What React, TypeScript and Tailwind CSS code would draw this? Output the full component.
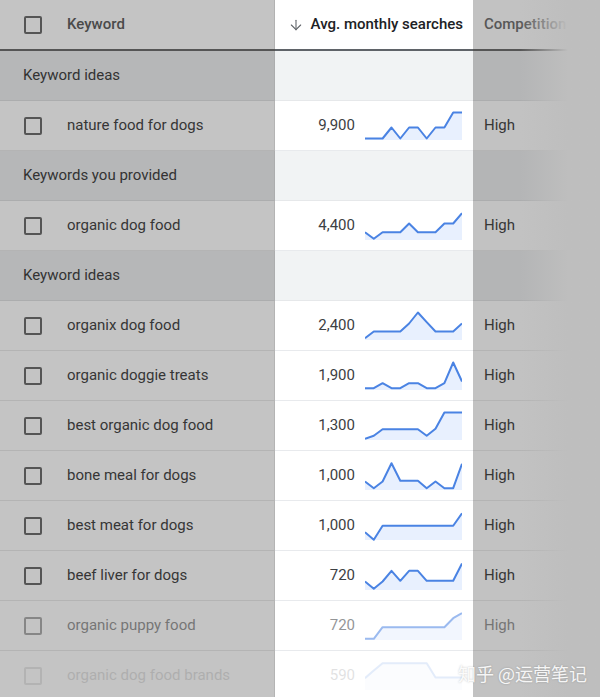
import React from 'react';
import { ArrowDown } from 'lucide-react';

type Row =
  | { kind: 'group'; label: string }
  | { kind: 'item'; keyword: string; searches: string; trend: number[]; fade?: 'mid' | 'low' };

const rows: Row[] = [
  { kind: 'group', label: 'Keyword ideas' },
  { kind: 'item', keyword: 'nature food for dogs', searches: '9,900', trend: [27, 27, 27, 16, 27, 16, 16, 27, 16, 16, 1, 1] },
  { kind: 'group', label: 'Keywords you provided' },
  { kind: 'item', keyword: 'organic dog food', searches: '4,400', trend: [20.7, 27.3, 20.7, 20.7, 20.7, 12, 20.7, 20.7, 20.7, 12, 12, 1.7] },
  { kind: 'group', label: 'Keyword ideas' },
  { kind: 'item', keyword: 'organix dog food', searches: '2,400', trend: [26.7, 20, 20, 20, 20, 12, 1, 10.7, 20, 20, 20, 12] },
  { kind: 'item', keyword: 'organic doggie treats', searches: '1,900', trend: [26.7, 26.7, 21.7, 26.7, 26.7, 21.7, 21.7, 26.7, 26.7, 21.7, 1, 20] },
  { kind: 'item', keyword: 'best organic dog food', searches: '1,300', trend: [27.3, 24.3, 17.7, 17.7, 17.7, 17.7, 17.7, 24.3, 17.3, 1, 1, 1] },
  { kind: 'item', keyword: 'bone meal for dogs', searches: '1,000', trend: [20, 26.7, 20, 1.7, 19.3, 19.3, 19.3, 26.7, 20, 26.7, 26.7, 2.3] },
  { kind: 'item', keyword: 'best meat for dogs', searches: '1,000', trend: [20.7, 28.3, 14.3, 14.3, 14.3, 14.3, 14.3, 14.3, 14.3, 14.3, 14.3, 1.7] },
  { kind: 'item', keyword: 'beef liver for dogs', searches: '720', trend: [20, 27.3, 20, 9.3, 19.3, 9.3, 9.3, 19.3, 19.3, 19.3, 19.3, 2] },
  { kind: 'item', keyword: 'organic puppy food', searches: '720', trend: [27.3, 27.3, 15.7, 15.7, 15.7, 15.7, 15.7, 15.7, 15.7, 15.7, 6.7, 1.7], fade: 'mid' },
  { kind: 'item', keyword: 'organic dog food brands', searches: '590', trend: [16.7, 9, 1.7, 1.7, 1.7, 1.7, 1.7, 1.7, 16, 16, 16, 16], fade: 'low' },
];

function Sparkline({ values }: { values: number[] }) {
  const step = 97 / (values.length - 1);
  const pts = values.map((v, i) => `${(i * step).toFixed(1)},${(v + 0.5).toFixed(1)}`).join(' ');
  return (
    <svg width="97" height="30" viewBox="0 0 97 30" className="flex-shrink-0">
      <polygon points={`${pts} 97,29 0,29`} fill="#e8f0fe" />
      <polyline points={pts} fill="none" stroke="#4a83e3" strokeWidth="2" strokeLinejoin="round" />
    </svg>
  );
}

function Checkbox() {
  return <div className="w-[18px] h-[18px] rounded-[2px] border-2 border-[#555555] flex-shrink-0"></div>;
}

export default function App() {
  return (
    <div className="relative w-[600px] h-[697px] overflow-hidden bg-[#bebebe] font-['Roboto',sans-serif] text-[15px]">
      {/* Header */}
      <div className="flex h-[49px]">
        <div className="w-[275px] flex items-center gap-[25px] pl-[24px] bg-[#c4c4c4] border-r border-[#b2b2b2]">
          <Checkbox />
          <span className="font-medium text-[#4a4a4a]">Keyword</span>
        </div>
        <div className="w-[198px] flex items-center justify-end gap-[7px] pr-[10px] bg-white">
          <ArrowDown className="w-4 h-4 text-[#5f6368]" strokeWidth={1.6} />
          <span className="font-medium text-[#202124]">Avg. monthly searches</span>
        </div>
        <div className="w-[127px] flex items-center pl-[11px] bg-[#c2c2c2]">
          <span className="font-medium text-[#575757] whitespace-nowrap">Competition</span>
        </div>
      </div>
      <div className="flex h-[2px]">
        <div className="w-[275px] bg-[#555555]"></div>
        <div className="w-[198px] bg-[#5f6368]"></div>
        <div className="w-[127px] bg-[#555555]"></div>
      </div>

      {/* Rows */}
      {rows.map((row, index) => {
        if (row.kind === 'group') {
          return (
            <div key={index} className="flex h-[50px]">
              <div className="w-[275px] flex items-center pl-[23px] bg-[#b6b7b8] border-b border-r border-[#acadae] text-[#333333]">
                {row.label}
              </div>
              <div className="w-[198px] bg-[#f1f3f4] border-b border-[#e6e8ea]"></div>
              <div className="w-[127px] bg-[#b4b5b6] border-b border-[#acadae]"></div>
            </div>
          );
        }
        const fade = row.fade === 'mid' ? 'opacity-55' : row.fade === 'low' ? 'opacity-15' : '';
        return (
          <div key={index} className="flex h-[50px]">
            <div className="w-[275px] flex items-center gap-[25px] pl-[24px] bg-[#c4c4c4] border-b border-r border-[#b4b4b4]">
              <div className={`flex items-center gap-[25px] ${fade}`}>
                <Checkbox />
                <span className="text-[#363636] whitespace-nowrap">{row.keyword}</span>
              </div>
            </div>
            <div className="w-[198px] flex items-center justify-end gap-[10px] pr-[11px] bg-white border-b border-[#e8eaed]">
              <div className={`flex items-center gap-[10px] ${fade}`}>
                <span className="text-[#3c4043]">{row.searches}</span>
                <Sparkline values={row.trend} />
              </div>
            </div>
            <div className="w-[127px] flex items-center pl-[11px] bg-[#c2c2c2] border-b border-[#b4b4b4]">
              {row.fade !== 'low' && <span className={`text-[#363636] ${fade}`}>High</span>}
            </div>
          </div>
        );
      })}

      {/* Right edge fade of the table */}
      <div className="absolute top-0 bottom-0 left-[520px] w-[80px] bg-gradient-to-r from-[#bebebe]/0 via-[#bebebe] via-60% to-[#bebebe]"></div>

      {/* Watermark */}
      <div className="absolute left-[458px] top-[660px] text-[18px] text-white/90 font-['Noto_Sans_CJK_SC',sans-serif] [text-shadow:0_0_2px_rgba(0,0,0,0.25)] whitespace-nowrap">
        知乎 @运营笔记
      </div>
    </div>
  );
}
